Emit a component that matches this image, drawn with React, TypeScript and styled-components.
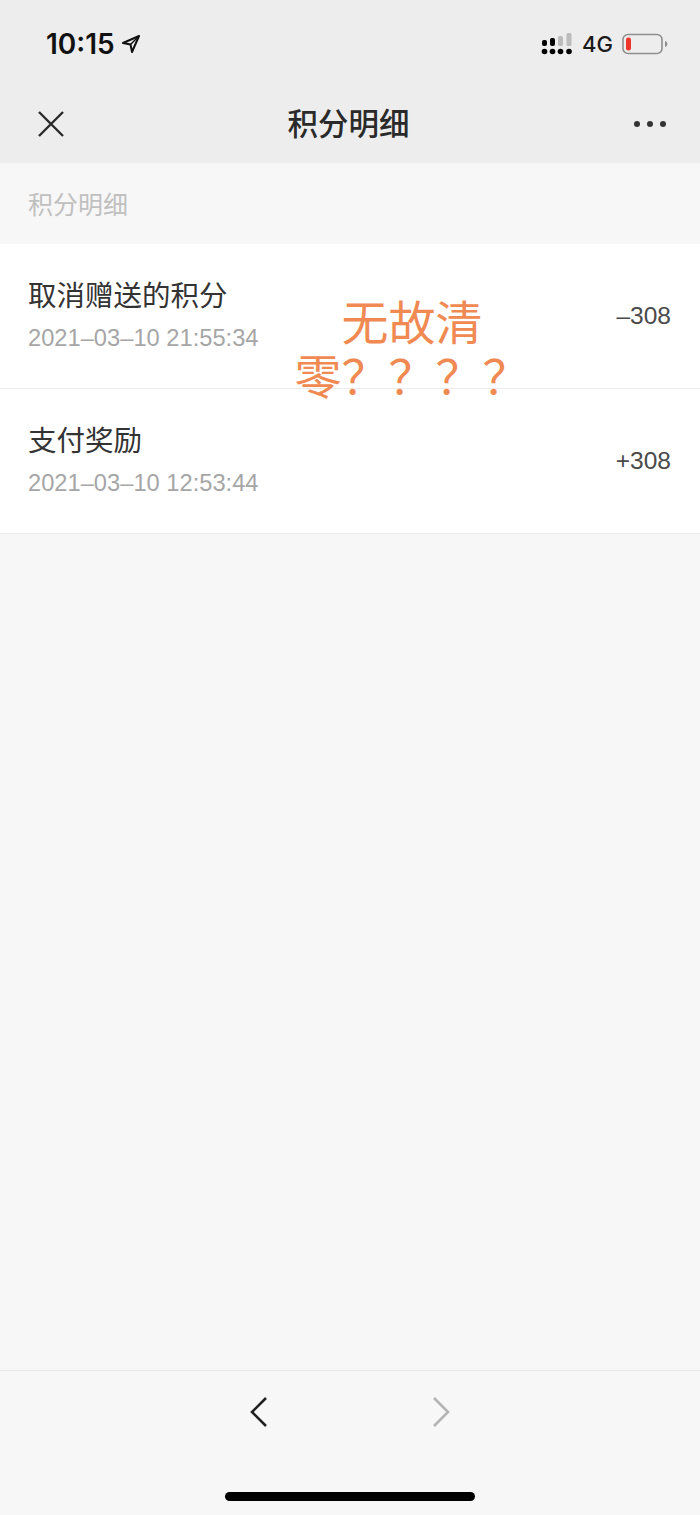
import React from 'react';
import styled, { createGlobalStyle } from 'styled-components';

const GlobalStyle = createGlobalStyle`
  html, body {
    margin: 0;
    padding: 0;
    background: #f7f7f7;
  }
  * {
    box-sizing: border-box;
  }
`;

const cjk = `Inter, "Noto Sans CJK SC", sans-serif`;

const Page = styled.div`
  position: relative;
  width: 700px;
  height: 1515px;
  display: flex;
  flex-direction: column;
  background: #f7f7f7;
  font-family: ${cjk};
  overflow: hidden;
`;

const Header = styled.header`
  height: 163px;
  flex: none;
  display: flex;
  flex-direction: column;
  background: #ededed;
`;

const StatusBar = styled.div`
  height: 88px;
  display: flex;
  align-items: center;
  justify-content: space-between;
  padding: 0 32px 0 46px;
`;

const Clock = styled.div`
  display: flex;
  align-items: center;
  gap: 6px;
  font-size: 28px;
  font-weight: 600;
  color: #111;
`;

const StatusRight = styled.div`
  display: flex;
  align-items: center;
  gap: 9px;
`;

const Network = styled.span`
  font-size: 22px;
  font-weight: 500;
  color: #1a1a1a;
`;

const NavBar = styled.div`
  height: 75px;
  display: flex;
  align-items: center;
  justify-content: space-between;
  padding: 0 33px 4px 36px;
`;

const NavTitle = styled.h1`
  margin: -4px 0 0 -2px;
  font-size: 30.5px;
  font-weight: 500;
  color: #2a2a2a;
`;

const SectionLabel = styled.div`
  height: 81px;
  flex: none;
  display: flex;
  align-items: center;
  padding: 0 0 2px 28px;
  font-size: 25px;
  color: #c0c0c0;
`;

const List = styled.div`
  flex: none;
  background: #fff;
`;

const Row = styled.div`
  height: 145px;
  display: flex;
  align-items: center;
  justify-content: space-between;
  padding: 0 29px 0 28px;
  border-bottom: 1px solid #ececec;
`;

const RowText = styled.div`
  display: flex;
  flex-direction: column;
  gap: 7px;
  padding-bottom: 3px;
`;

const RowTitle = styled.div`
  font-size: 28.5px;
  line-height: 40px;
  color: #333;
`;

const RowDate = styled.div`
  font-family: "Liberation Sans", sans-serif;
  font-size: 23.7px;
  line-height: 30px;
  color: #a6a6a6;
`;

const Amount = styled.div`
  font-family: "Liberation Sans", sans-serif;
  font-size: 24.5px;
  color: #4a4a4a;
`;

const Note = styled.div`
  position: absolute;
  left: 292px;
  top: 293px;
  width: 240px;
  text-align: center;
  font-size: 47px;
  line-height: 54px;
  font-family: "Noto Sans CJK SC", sans-serif;
  font-weight: 400;
  color: #f08a52;
`;

const Spacer = styled.div`
  flex: 1;
`;

const Footer = styled.footer`
  height: 145px;
  flex: none;
  display: flex;
  flex-direction: column;
  align-items: center;
  border-top: 1px solid #e8e8e8;
`;

const ArrowRow = styled.div`
  display: flex;
  align-items: center;
  gap: 164px;
  height: 82px;
`;

const HomeBar = styled.div`
  width: 250px;
  height: 9px;
  margin-top: 39px;
  border-radius: 5px;
  background: #000;
`;

const LocationIcon = () => (
  <svg width="20" height="20" viewBox="0 0 20 20" fill="none">
    <path d="M18 2 2 9l7.5 1.5L11 18z" stroke="#111" strokeWidth="2" strokeLinejoin="round" />
    <path d="M18 2 9.5 10.5" stroke="#111" strokeWidth="1.5" />
  </svg>
);

const SignalIcon = () => (
  <svg width="32" height="24" viewBox="0 0 32 24">
    <g fill="#000">
      <rect x="1" y="8" width="5" height="6" rx="2" />
      <rect x="9" y="6" width="5" height="8" rx="2" />
      <circle cx="3.5" cy="19.5" r="2.8" />
      <circle cx="11.5" cy="19.5" r="2.8" />
      <circle cx="19.5" cy="19.5" r="2.8" />
      <circle cx="28" cy="19.5" r="2.8" />
    </g>
    <g fill="#bcbcbc">
      <rect x="17" y="4" width="5" height="10" rx="1.5" />
      <rect x="25.5" y="1" width="5" height="13" rx="1.5" />
    </g>
  </svg>
);

const BatteryIcon = () => (
  <svg width="46" height="24" viewBox="0 0 46 24" fill="none">
    <rect x="1" y="2.5" width="39" height="19" rx="5" stroke="#8f8f8f" strokeWidth="1.6" />
    <rect x="4" y="5.5" width="5" height="13" rx="2.2" fill="#f0352b" />
    <path d="M43 9c1.6.4 2.4 1.6 2.4 3s-.8 2.6-2.4 3z" fill="#8f8f8f" />
  </svg>
);

const CloseIcon = () => (
  <svg width="30" height="30" viewBox="0 0 30 30" fill="none">
    <path d="M3 3l24 24M27 3 3 27" stroke="#2b2b2b" strokeWidth="2.4" />
  </svg>
);

const MoreIcon = () => (
  <svg width="34" height="8" viewBox="0 0 34 8">
    <g fill="#333">
      <circle cx="4" cy="4" r="3" />
      <circle cx="17" cy="4" r="3" />
      <circle cx="30" cy="4" r="3" />
    </g>
  </svg>
);

const Chevron = ({ direction, color }: { direction: 'left' | 'right'; color: string }) => (
  <svg width="18" height="32" viewBox="0 0 18 32" fill="none">
    <path
      d={direction === 'left' ? 'M16 2 2 16l14 14' : 'M2 2l14 14L2 30'}
      stroke={color}
      strokeWidth="2.6"
    />
  </svg>
);

const rows = [
  { title: '取消赠送的积分', date: '2021–03–10 21:55:34', amount: '–308' },
  { title: '支付奖励', date: '2021–03–10 12:53:44', amount: '+308' },
];

export default function App() {
  return (
    <Page>
      <GlobalStyle />
      <Header>
        <StatusBar>
          <Clock>
            10:15
            <LocationIcon />
          </Clock>
          <StatusRight>
            <SignalIcon />
            <Network>4G</Network>
            <BatteryIcon />
          </StatusRight>
        </StatusBar>
        <NavBar>
          <CloseIcon />
          <NavTitle>积分明细</NavTitle>
          <MoreIcon />
        </NavBar>
      </Header>
      <SectionLabel>积分明细</SectionLabel>
      <List>
        {rows.map((row) => (
          <Row key={row.date}>
            <RowText>
              <RowTitle>{row.title}</RowTitle>
              <RowDate>{row.date}</RowDate>
            </RowText>
            <Amount>{row.amount}</Amount>
          </Row>
        ))}
      </List>
      <Spacer />
      <Footer>
        <ArrowRow>
          <Chevron direction="left" color="#222" />
          <Chevron direction="right" color="#b4b4b4" />
        </ArrowRow>
        <HomeBar />
      </Footer>
      <Note>
        无故清
        <br />
        零？？？？
      </Note>
    </Page>
  );
}
